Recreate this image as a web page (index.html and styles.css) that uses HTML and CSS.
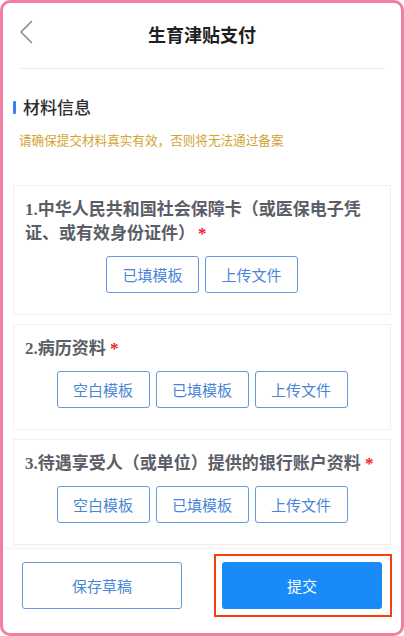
FILE: index.html
```html
<!DOCTYPE html>
<html lang="zh-CN">
<head>
<meta charset="utf-8">
<title>生育津贴支付</title>
<link rel="stylesheet" href="styles.css">
</head>
<body>
<div class="frame">
  <header class="header">
    <svg class="back" width="14" height="24" viewBox="0 0 14 24"><path d="M12.5 1.5 L2 12 L12.5 22.5" fill="none" stroke="#8a8a8a" stroke-width="1.6" stroke-linecap="round" stroke-linejoin="round"/></svg>
    <h1 class="title">生育津贴支付</h1>
  </header>
  <div class="divider"></div>
  <main class="content">
    <h2 class="section-title">材料信息</h2>
    <p class="warning">请确保提交材料真实有效，否则将无法通过备案</p>
    <section class="card">
      <p class="card-title">1.中华人民共和国社会保障卡（或医保电子凭证、或有效身份证件）<span class="req req-gap">*</span></p>
      <div class="btns">
        <button class="btn">已填模板</button>
        <button class="btn">上传文件</button>
      </div>
    </section>
    <section class="card">
      <p class="card-title">2.病历资料 <span class="req">*</span></p>
      <div class="btns">
        <button class="btn">空白模板</button>
        <button class="btn">已填模板</button>
        <button class="btn">上传文件</button>
      </div>
    </section>
    <section class="card">
      <p class="card-title">3.待遇享受人（或单位）提供的银行账户资料 <span class="req">*</span></p>
      <div class="btns">
        <button class="btn">空白模板</button>
        <button class="btn">已填模板</button>
        <button class="btn">上传文件</button>
      </div>
    </section>
  </main>
  <footer class="footer">
    <button class="fbtn fbtn-outline">保存草稿</button>
    <div class="submit-wrap">
      <button class="fbtn fbtn-primary">提交</button>
      <span class="highlight"></span>
    </div>
  </footer>
</div>
</body>
</html>
```
FILE: styles.css
```css
* { box-sizing: border-box; }
html, body { margin: 0; padding: 0; background: #fff; }
body { font-family: "Noto Sans CJK SC", "Noto Sans", sans-serif; }

.frame {
  width: 404px;
  height: 636px;
  border: 3px solid #f27fa1;
  border-radius: 10px;
  overflow: hidden;
  display: flex;
  flex-direction: column;
  background: #fff;
}

.header {
  position: relative;
  height: 65px;
  display: flex;
  align-items: center;
  justify-content: center;
}
.back {
  position: absolute;
  left: 16px;
  top: 17px;
}
.title {
  margin: 0;
  font-size: 18px;
  font-weight: 700;
  color: #1f1f1f;
  line-height: 24px;
  margin-top: -3px;
}
.divider {
  margin: 0 16px 0 17px;
  border-top: 1px solid #ececec;
}

.content {
  flex: 1;
  padding: 0 10px;
}
.section-title {
  margin: 26px 0 0 0;
  display: flex;
  align-items: center;
  font-size: 17px;
  font-weight: 500;
  color: #2e2e2e;
  line-height: 24px;
}
.section-title::before {
  content: "";
  width: 3px;
  height: 13px;
  background: #3d7ef2;
  border-radius: 1px;
  margin-right: 7px;
}
.warning {
  margin: 12px 0 0 6px;
  font-size: 12.6px;
  line-height: 18px;
  color: #d3a434;
}

.card {
  border: 1px solid #eff0f2;
  background: #fff;
  padding: 12px 15px 21px 11px;
  margin-top: 9px;
}
.warning + .card { margin-top: 36px; }
.card-title {
  margin: 0;
  font-family: "Liberation Serif", "Noto Sans CJK SC", serif;
  font-weight: 700;
  font-size: 17px;
  line-height: 24px;
  color: #5a5e66;
}
.req {
  color: #f5222d;
  font-weight: 700;
}
.req-gap { margin-left: 3px; }
.btns {
  display: flex;
  justify-content: center;
  gap: 6px;
  margin-top: 10px;
  padding-left: 4px;
}
.btn {
  width: 93px;
  height: 37px;
  border: 1.5px solid #6399de;
  border-radius: 3px;
  background: #fff;
  color: #4a86d6;
  font-family: "Noto Sans CJK SC", sans-serif;
  font-size: 15px;
  padding: 0;
}

.footer {
  height: 83px;
  flex: none;
  display: grid;
  grid-template-columns: 160px 160px;
  column-gap: 40px;
  padding: 12px 19px 0 19px;
  box-shadow: 0 -3px 5px rgba(0, 0, 0, 0.035);
  position: relative;
}
.fbtn {
  width: 160px;
  height: 47px;
  border-radius: 3px;
  font-family: "Noto Sans CJK SC", sans-serif;
  font-size: 15px;
  padding: 0;
}
.fbtn-outline {
  border: 1.5px solid #6399de;
  background: #fff;
  color: #4a86d6;
}
.fbtn-primary {
  border: none;
  background: #1a8af8;
  color: #fff;
}
.submit-wrap {
  position: relative;
  height: 47px;
}
.highlight {
  position: absolute;
  left: -8px;
  top: -8px;
  width: 178px;
  height: 63px;
  border: 2.5px solid #f83d0c;
  pointer-events: none;
}
```
